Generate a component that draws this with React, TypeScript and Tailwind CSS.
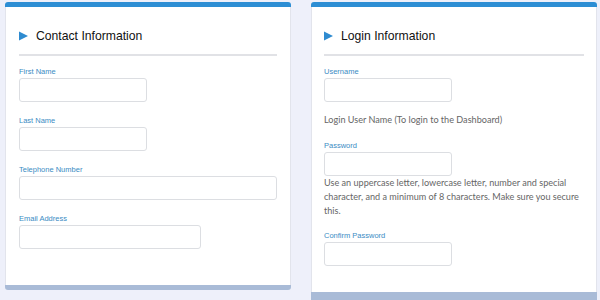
import React from 'react';

const Field: React.FC<{ label: string; width: string; className?: string }> = ({ label, width, className = '' }) => (
  <div className={className}>
    <div className="h-[10px] text-[7.5px] leading-[10px] text-[#3a8cc4]">{label}</div>
    <div className={`mt-[1px] h-[24px] ${width} rounded-[3px] border border-[#dcdee2] bg-white`}></div>
  </div>
);

const Heading: React.FC<{ title: string }> = ({ title }) => (
  <>
    <div className="box-content flex h-[20px] items-center pt-[19px]">
      <svg width="9" height="10" viewBox="0 0 9 10" className="shrink-0">
        <path d="M0 0.5 L9 5 L0 9.5 Z" fill="#2f8bd0" />
      </svg>
      <span className="ml-[8px] text-[12.2px] text-[#111]">{title}</span>
    </div>
    <div className="mt-[8px] h-[1.5px] bg-[#e1e2e6]"></div>
  </>
);

const App: React.FC = () => {
  return (
    <div className="h-[300px] w-[600px] overflow-hidden bg-[#eef0fa] pt-[2px] font-['Liberation_Sans',Arial,sans-serif]">
      <div className="flex items-start gap-[20px] pl-[5px]">
        {/* Contact card */}
        <div className="w-[286px]">
          <div className="h-[5px] rounded-t-[3px] bg-[#2d8ed4]"></div>
          <div className="h-[278px] border-x border-[#e2e4ec] bg-white px-[13px]">
            <Heading title="Contact Information" />
            <div className="pt-[11px]">
              <Field label="First Name" width="w-[128px]" />
              <Field label="Last Name" width="w-[128px]" className="mt-[14px]" />
              <Field label="Telephone Number" width="w-full" className="mt-[14px]" />
              <Field label="Email Address" width="w-[182px]" className="mt-[14px]" />
            </div>
          </div>
          <div className="h-[5px] rounded-b-[3px] bg-[#a9bbd7]"></div>
        </div>

        {/* Login card */}
        <div className="w-[286px]">
          <div className="h-[5px] rounded-t-[3px] bg-[#2d8ed4]"></div>
          <div className="h-[285px] border-x border-[#e2e4ec] bg-white px-[12px]">
            <Heading title="Login Information" />
            <div className="pt-[11px]">
              <Field label="Username" width="w-[128px]" />
              <p className="mt-[11px] whitespace-nowrap font-['Lato',sans-serif] text-[9.1px] leading-[14px] text-[#666]">
                Login User Name (To login to the Dashboard)
              </p>
              <Field label="Password" width="w-[128px]" className="mt-[14px]" />
              <p className="whitespace-nowrap font-['Lato',sans-serif] text-[9.1px] leading-[14px] text-[#666]">
                Use an uppercase letter, lowercase letter, number and special
                <br />
                character, and a minimum of 8 characters. Make sure you secure
                <br />
                this.
              </p>
              <Field label="Confirm Password" width="w-[128px]" className="mt-[13px]" />
            </div>
          </div>
          <div className="h-[8px] bg-[#a9bbd7]"></div>
        </div>
      </div>
    </div>
  );
};

export default App;
